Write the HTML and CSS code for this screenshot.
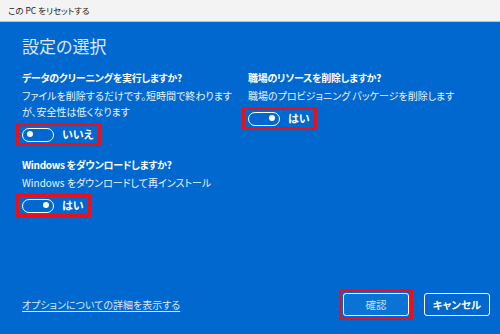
FILE: index.html
```html
<!DOCTYPE html>
<html lang="ja">
<head>
<meta charset="utf-8">
<link rel="stylesheet" href="styles.css">
</head>
<body>
<div class="window">
  <div class="titlebar">この PC をリセットする</div>
  <div class="content">
    <h1 class="heading">設定の選択</h1>
    <div class="grid">
      <div class="option">
        <div class="q">データのクリーニングを実行しますか?</div>
        <div class="desc">ファイルを削除するだけです。短時間で終わります<br>が、安全性は低くなります</div>
        <div class="mark">
          <span class="toggle off"><span class="knob"></span></span>
          <span class="tlabel">いいえ</span>
        </div>
      </div>
      <div class="option">
        <div class="q">職場のリソースを削除しますか?</div>
        <div class="desc">職場のプロビジョニング パッケージを削除します</div>
        <div class="mark">
          <span class="toggle on"><span class="knob"></span></span>
          <span class="tlabel">はい</span>
        </div>
      </div>
      <div class="option span">
        <div class="q">Windows をダウンロードしますか?</div>
        <div class="desc">Windows をダウンロードして再インストール</div>
        <div class="mark">
          <span class="toggle on"><span class="knob"></span></span>
          <span class="tlabel">はい</span>
        </div>
      </div>
    </div>
    <div class="footer">
      <a class="link" href="#">オプションについての詳細を表示する</a>
      <div class="buttons">
        <div class="mark btnmark"><button class="btn primary">確認</button></div>
        <button class="btn">キャンセル</button>
      </div>
    </div>
  </div>
</div>
</body>
</html>
```

FILE: styles.css
```css
* { box-sizing: border-box; }
html, body { margin: 0; padding: 0; }
body {
  width: 500px;
  height: 334px;
  overflow: hidden;
  font-family: "Noto Sans CJK JP", "Noto Sans", sans-serif;
  font-feature-settings: "palt";
}
.window {
  width: 500px;
  height: 334px;
  display: flex;
  flex-direction: column;
  background: #0068cf;
}
.titlebar {
  height: 22px;
  flex: none;
  background: #f3f3f3;
  border-bottom: 1px solid #a8c8ea;
  color: #1a1a1a;
  font-size: 8.5px;
  line-height: 21px;
  padding-left: 8px;
}
.content {
  flex: 1;
  display: flex;
  flex-direction: column;
  padding: 12px 10px 0 16px;
  color: #fff;
}
.heading {
  margin: 0 0 0 6px;
  font-size: 17px;
  font-weight: 400;
  line-height: 24px;
  color: #dce9f8;
}
.grid {
  display: grid;
  grid-template-columns: 226px 1fr;
  margin-top: 12px;
  row-gap: 11px;
}
.option {
  display: flex;
  flex-direction: column;
  align-items: flex-start;
}
.option.span { grid-column: 1 / 3; }
.q {
  margin-left: 6px;
  font-size: 10px;
  font-weight: 700;
  letter-spacing: -0.3px;
  line-height: 16px;
}
.desc {
  margin-left: 6px;
  margin-top: 2px;
  font-size: 10px;
  line-height: 16px;
  color: #eef4fb;
}
.mark {
  display: inline-flex;
  align-items: center;
  gap: 8px;
  border: 3px solid #e8101c;
  padding: 1.5px 4px 1.5px 3px;
  margin-top: 3px;
}
.toggle {
  position: relative;
  width: 32px;
  height: 14px;
  border: 1.5px solid #fff;
  border-radius: 7px;
  display: inline-block;
}
.knob {
  position: absolute;
  top: 2.5px;
  width: 6px;
  height: 6px;
  border-radius: 50%;
  background: #fff;
}
.toggle.off .knob { left: 4px; }
.toggle.on .knob { right: 4px; }
.tlabel {
  font-size: 11px;
  font-weight: 700;
  line-height: 13px;
}
.footer {
  margin-top: auto;
  height: 52px;
  display: flex;
  align-items: center;
  justify-content: space-between;
  padding-bottom: 8px;
}
.link {
  margin-left: 6px;
  font-size: 10px;
  color: #dbe8f7;
  text-decoration: underline;
  text-underline-offset: 2px;
}
.buttons {
  display: flex;
  align-items: center;
  gap: 11px;
}
.btnmark { padding: 1px; margin-top: 0; }
.btn {
  width: 66px;
  height: 23px;
  border: 1.5px solid #fff;
  border-radius: 3px;
  background: #0068cf;
  color: #fff;
  font-family: inherit;
  font-feature-settings: "palt";
  font-size: 10.5px;
  font-weight: 700;
  padding: 0;
}
.btn.primary {
  background: #0a74d6;
  color: #c9dcf2;
  font-weight: 400;
}
```
